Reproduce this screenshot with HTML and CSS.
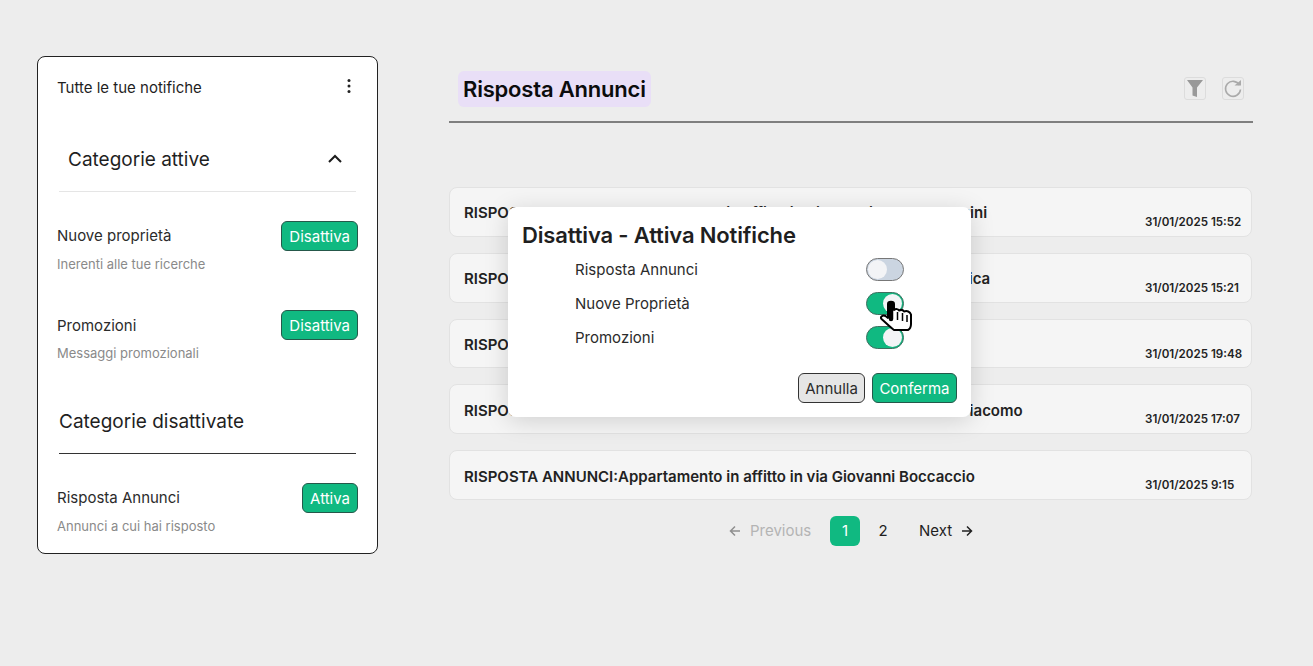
FILE: index.html
```html
<!DOCTYPE html>
<html lang="en">
<head>
    <meta charset="UTF-8">
    <meta name="viewport" content="width=device-width, initial-scale=1.0">
    <title>Notifiche</title>
    <link rel="stylesheet" href="styles.css">
</head>
<body>
    <div class="page">
        <aside class="panel">
            <div class="panel-top">
                <span>Tutte le tue notifiche</span>
                <svg class="dots" width="4" height="16" viewBox="0 0 4 16"><circle cx="2" cy="2.500" r="1.500"/><circle cx="2" cy="8" r="1.500"/><circle cx="2" cy="13.500" r="1.500"/></svg>
            </div>

            <div class="section-head">
                <span>Categorie attive</span>
                <svg width="16" height="10" viewBox="0 0 16 10"><path d="M2 8l6-6 6 6" fill="none" stroke="#1c1c1c" stroke-width="2"/></svg>
            </div>

            <div class="cat cat-first">
                <div class="cat-row">
                    <span class="cat-name">Nuove proprietà</span>
                    <button class="btn-green">Disattiva</button>
                </div>
                <p class="cat-sub">Inerenti alle tue ricerche</p>
            </div>
            <div class="cat cat-second">
                <div class="cat-row">
                    <span class="cat-name">Promozioni</span>
                    <button class="btn-green">Disattiva</button>
                </div>
                <p class="cat-sub">Messaggi promozionali</p>
            </div>

            <div class="section-off">Categorie disattivate</div>

            <div class="cat cat-off">
                <div class="cat-row">
                    <span class="cat-name">Risposta Annunci</span>
                    <button class="btn-green">Attiva</button>
                </div>
                <p class="cat-sub">Annunci a cui hai risposto</p>
            </div>
        </aside>

        <main class="main">
            <div class="main-head">
                <h1 class="pill">Risposta Annunci</h1>
                <div class="tools">
                    <span class="tool">
                        <svg width="18" height="19" viewBox="0 0 18 19"><path d="M1 1h16l-6 7.500V18l-4.500-1.500v-8z" fill="#999"/></svg>
                    </span>
                    <span class="tool">
                        <svg width="20" height="20" viewBox="0 0 20 20"><path d="M16.500 6a7.500 7.500 0 1 0 1 4.500" fill="none" stroke="#aaa" stroke-width="1.600"/><path d="M11.500 6.500h6.500v-5.500z" fill="#aaa"/></svg>
                    </span>
                </div>
            </div>

            <ul class="list">
                <li class="item"><span class="item-title">RISPOSTA ANNUNCI:Appartamento in affitto in piazza Giuseppe Mazzini</span><span class="item-date">31/01/2025 15:52</span></li>
                <li class="item"><span class="item-title">RISPOSTA ANNUNCI:Appartamento in affitto in piazzale della Repubblica</span><span class="item-date">31/01/2025 15:21</span></li>
                <li class="item"><span class="item-title">RISPOSTA ANNUNCI:Appartamento in affitto in via Roma</span><span class="item-date">31/01/2025 19:48</span></li>
                <li class="item"><span class="item-title">RISPOSTA ANNUNCI:Monolocale in affitto in via Ludovico Maria San Giacomo</span><span class="item-date">31/01/2025 17:07</span></li>
                <li class="item"><span class="item-title">RISPOSTA ANNUNCI:Appartamento in affitto in via Giovanni Boccaccio</span><span class="item-date">31/01/2025 9:15</span></li>
            </ul>

            <nav class="pager">
                <span class="pager-prev">
                    <svg width="12" height="12" viewBox="0 0 12 12"><path d="M11 6H1.500M6 1.500L1.500 6 6 10.500" fill="none" stroke="#8f8f8f" stroke-width="1.500"/></svg>
                    Previous
                </span>
                <span class="page-num current">1</span>
                <span class="page-num">2</span>
                <span class="pager-next">
                    Next
                    <svg width="12" height="12" viewBox="0 0 12 12"><path d="M1 6h9.500M6 1.500L10.500 6 6 10.500" fill="none" stroke="#222" stroke-width="1.500"/></svg>
                </span>
            </nav>
        </main>
    </div>

    <div class="modal">
        <h2 class="modal-title">Disattiva - Attiva Notifiche</h2>
        <div class="modal-row"><span>Risposta Annunci</span><span class="toggle"></span></div>
        <div class="modal-row"><span>Nuove Proprietà</span><span class="toggle on"></span></div>
        <div class="modal-row"><span>Promozioni</span><span class="toggle on"></span></div>
        <div class="modal-actions">
            <button class="btn-grey">Annulla</button>
            <button class="btn-green btn-confirm">Conferma</button>
        </div>
    </div>

    <svg class="hand" width="34" height="34" viewBox="0 0 34 34">
        <path d="M8 4c0-3 6-3 6 0v6c2-1.500 4-1 5 .5 2-1 4-.5 5 1 3-1 6 0 7 3V24c0 3-1 5-3 6H14C11 28 5 22 1.500 19c-1.500-2 1-4.500 4-3l2.500 2z" fill="#fff" stroke="#000" stroke-width="2" stroke-linejoin="round"/>
        <path d="M11 4v15" stroke="#000" stroke-width="4.500" stroke-linecap="round"/>
        <path d="M17.500 12v8M22.500 13v8M27 15v7" stroke="#000" stroke-width="1.500"/>
    </svg>
</body>
</html>
```

FILE: styles.css
```css
* {
    box-sizing: border-box;
}

html, body {
    margin: 0;
    height: 666px;
    overflow: hidden;
}

body {
    background-color: #ededed;
    color: #1f1f1f;
    font-family: Inter, 'Liberation Sans', sans-serif;
    font-size: 15px;
    position: relative;
}

.page {
    display: flex;
    align-items: flex-start;
    gap: 71px;
    padding: 56px 0 0 37px;
}

/* left panel */
.panel {
    width: 341px;
    height: 498px;
    background-color: #fff;
    border: 1px solid #222;
    border-radius: 8px;
    padding: 0 19px;
}

.panel-top {
    display: flex;
    justify-content: space-between;
    align-items: center;
    height: 60px;
    padding-right: 7px;
}

.dots {
    fill: #222;
    margin-top: -2px;
}

.section-head {
    display: flex;
    justify-content: space-between;
    align-items: center;
    margin: 0 2px;
    padding: 10px 13px 0 9px;
    height: 75px;
    font-size: 19px;
    border-bottom: 1px solid #e5e5e5;
}

.cat-first {
    margin-top: 29px;
}

.cat-second {
    margin-top: 38px;
}

.cat-off {
    margin-top: 29px;
}

.cat-row {
    display: flex;
    justify-content: space-between;
    align-items: center;
    height: 30px;
    color: #2b2b2b;
}

.cat-name {
    margin-top: -2px;
}

.cat-second .cat-name {
    margin-top: 0;
}

.cat-sub {
    margin: 5px 0 0;
    font-size: 13px;
    line-height: 16px;
    color: #8a8a8a;
}

.btn-green {
    height: 30px;
    padding: 0 7px;
    background-color: #10b981;
    color: #fff;
    border: 1px solid #25584a;
    border-radius: 6px;
    font-family: inherit;
    font-size: 15px;
}

.btn-confirm {
    padding: 0 6.500px;
}

.section-off {
    margin: 46px 2px 0;
    height: 47px;
    padding-top: 2px;
    font-size: 19px;
    line-height: 26px;
    border-bottom: 1px solid #333;
}

/* main column */
.main {
    width: 804px;
}

.main-head {
    display: flex;
    justify-content: space-between;
    align-items: flex-start;
    height: 67px;
    padding: 15px 9px 0 9px;
    border-bottom: 2px solid #7f7f7f;
}

.pill {
    margin: 0;
    height: 36px;
    padding: 0 5px;
    background-color: #e9dff7;
    border-radius: 6px;
    color: #0c0c0c;
    font-size: 22px;
    font-weight: 600;
    line-height: 36px;
    letter-spacing: -0.2px;
}

.tools {
    display: flex;
    gap: 16px;
    margin-top: 6px;
}

.tool {
    display: flex;
    align-items: center;
    justify-content: center;
    width: 22px;
    height: 23px;
    border: 1px solid #dcdcdc;
    border-radius: 3px;
}

.list {
    list-style: none;
    margin: 64px 1px 0 0;
    padding: 0;
    display: flex;
    flex-direction: column;
    gap: 16px;
}

.item {
    position: relative;
    display: flex;
    align-items: center;
    height: 49.800px;
    padding: 0 14px;
    background-color: #f5f5f5;
    border: 1px solid #e2e2e2;
    border-radius: 8px;
    font-weight: 600;
}

.item-title {
    color: #222;
    padding-top: 2px;
    white-space: nowrap;
}

.item-date {
    position: absolute;
    left: 695px;
    top: 27px;
    font-size: 11.600px;
    line-height: 14px;
    color: #222;
}

.pager {
    display: flex;
    align-items: center;
    margin-top: 16px;
    padding-left: 279px;
    height: 30px;
}

.pager-prev {
    display: flex;
    align-items: center;
    gap: 9px;
    width: 102px;
    margin-left: 1px;
    margin-right: -1px;
    color: #b4b4b4;
}

.page-num {
    display: flex;
    align-items: center;
    justify-content: center;
    width: 30px;
    height: 30px;
    border-radius: 6px;
    margin-right: 8px;
}

.current {
    background-color: #10b981;
    color: #fff;
}

.pager-next {
    display: flex;
    align-items: center;
    gap: 9px;
    margin-left: 13px;
}

/* dialog */
.modal {
    position: absolute;
    left: 508px;
    top: 207px;
    width: 463px;
    height: 210px;
    background-color: #fff;
    border-radius: 8px;
    box-shadow: 0 4px 24px rgba(0, 0, 0, 0.15);
    padding: 14px 14px 0;
}

.modal-title {
    margin: 0 0 3px;
    font-size: 22px;
    font-weight: 600;
    line-height: 28px;
    letter-spacing: -0.15px;
    color: #1f1f1f;
}

.modal-row {
    display: flex;
    justify-content: space-between;
    align-items: center;
    height: 34px;
    padding: 0 53px 0 53px;
    color: #2b2b2b;
}

.toggle {
    position: relative;
    width: 38px;
    height: 23px;
    background-color: #cbd5e1;
    border: 1px solid #777;
    border-radius: 12px;
}

.toggle::after {
    content: "";
    position: absolute;
    left: 1px;
    top: 1px;
    width: 19px;
    height: 19px;
    background-color: #f3f4f6;
    border-radius: 50%;
}

.toggle.on {
    background-color: #10b981;
    border-color: #3f6f60;
}

.toggle.on::after {
    left: 16px;
}

.modal-actions {
    display: flex;
    justify-content: flex-end;
    gap: 7px;
    margin-top: 19px;
}

.btn-grey {
    height: 30px;
    padding: 0 6px;
    background-color: #e5e5e5;
    color: #2b2b2b;
    border: 1px solid #333;
    border-radius: 6px;
    font-family: inherit;
    font-size: 15px;
}

.hand {
    position: absolute;
    left: 880px;
    top: 300px;
}
```
